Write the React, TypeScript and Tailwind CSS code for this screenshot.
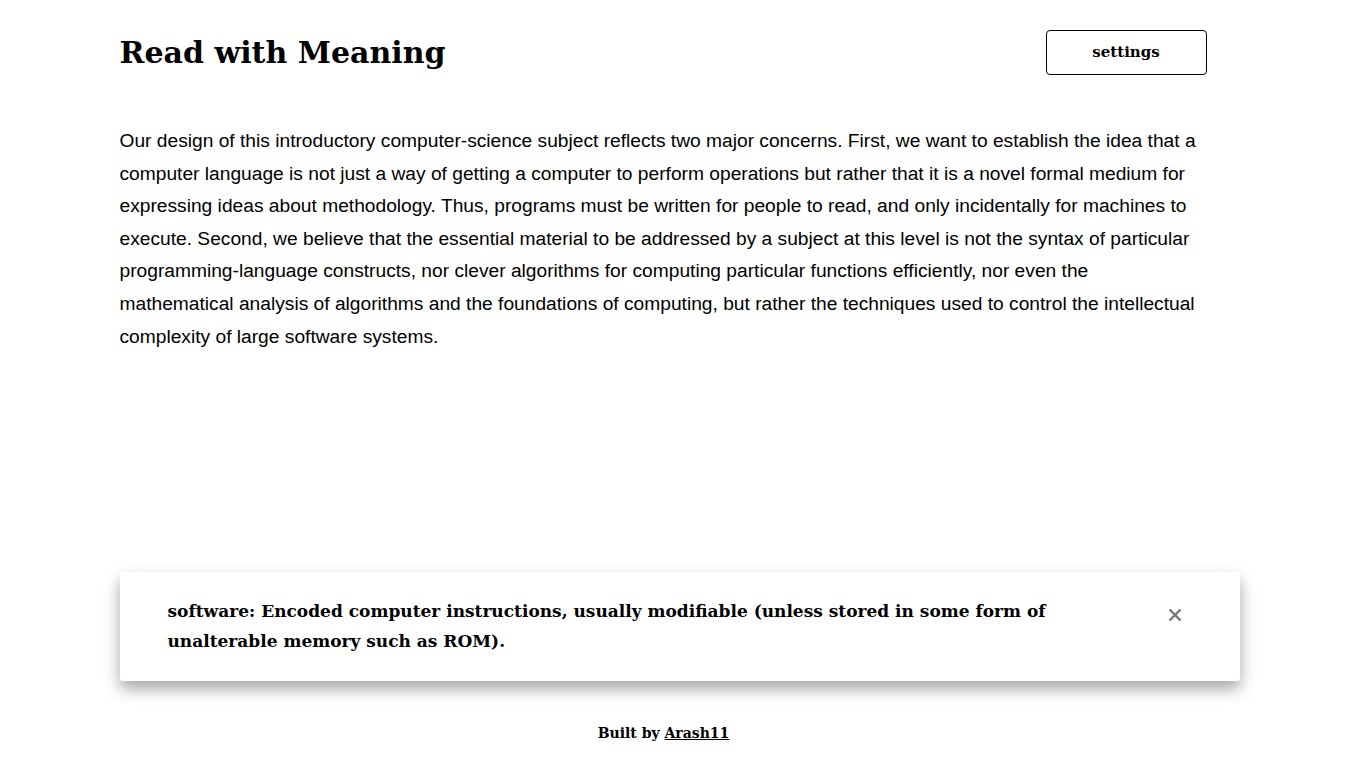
import { useState } from "react";

const SERIF = "font-['DejaVu_Serif','Liberation_Serif',serif]";

const App = () => {
  const [showDefinition, setShowDefinition] = useState(true);

  return (
    <div className="h-screen flex flex-col bg-white text-black">
      <div className="w-[1120px] mx-auto flex-1 flex flex-col">
        <header className="mt-[30px] h-[45px] flex items-center justify-between">
          <h1 className={`${SERIF} text-[30px] font-bold leading-none`}>
            Read with Meaning
          </h1>
          <button
            className={`${SERIF} mr-[33px] w-[161px] h-[45px] border border-black rounded text-[15px] font-bold`}
          >
            settings
          </button>
        </header>

        <main className="flex-1">
          {/* the reading text */}
          <p className="mt-[50px] pr-[38px] font-['Liberation_Sans',Arial,sans-serif] text-[19.2px] leading-[32.6px]">
            Our design of this introductory computer-science subject reflects
            two major concerns. First, we want to establish the idea that a
            computer language is not just a way of getting a computer to
            perform operations but rather that it is a novel formal medium for
            expressing ideas about methodology. Thus, programs must be written
            for people to read, and only incidentally for machines to execute.
            Second, we believe that the essential material to be addressed by a
            subject at this level is not the syntax of particular
            programming-language constructs, nor clever algorithms for
            computing particular functions efficiently, nor even the
            mathematical analysis of algorithms and the foundations of
            computing, but rather the techniques used to control the
            intellectual complexity of large software systems.
          </p>
        </main>

        {showDefinition && (
          <div className="h-[109px] bg-white rounded-[3px] shadow-[0_8px_16px_rgba(0,0,0,0.35)] flex items-start pl-12 pr-[57px] py-6">
            <p className={`${SERIF} flex-1 max-w-[900px] text-[17px] font-bold leading-[30px]`}>
              software: Encoded computer instructions, usually modifiable
              (unless stored in some form of unalterable memory such as ROM).
            </p>
            <button
              className="ml-auto mt-[11px] text-[#777]"
              onClick={() => setShowDefinition(false)}
              aria-label="close"
            >
              <svg
                xmlns="http://www.w3.org/2000/svg"
                viewBox="0 0 24 24"
                fill="none"
                stroke="currentColor"
                strokeWidth={3.5}
                className="size-[16px]"
              >
                <path strokeLinecap="square" d="M5 5l14 14M19 5L5 19" />
              </svg>
            </button>
          </div>
        )}
      </div>

      <footer className={`${SERIF} mt-[40px] mb-[31px] pr-[32px] h-6 text-center text-[14px] font-bold leading-6`}>
        Built by <a className="underline">Arash11</a>
      </footer>
    </div>
  );
};

export default App;
